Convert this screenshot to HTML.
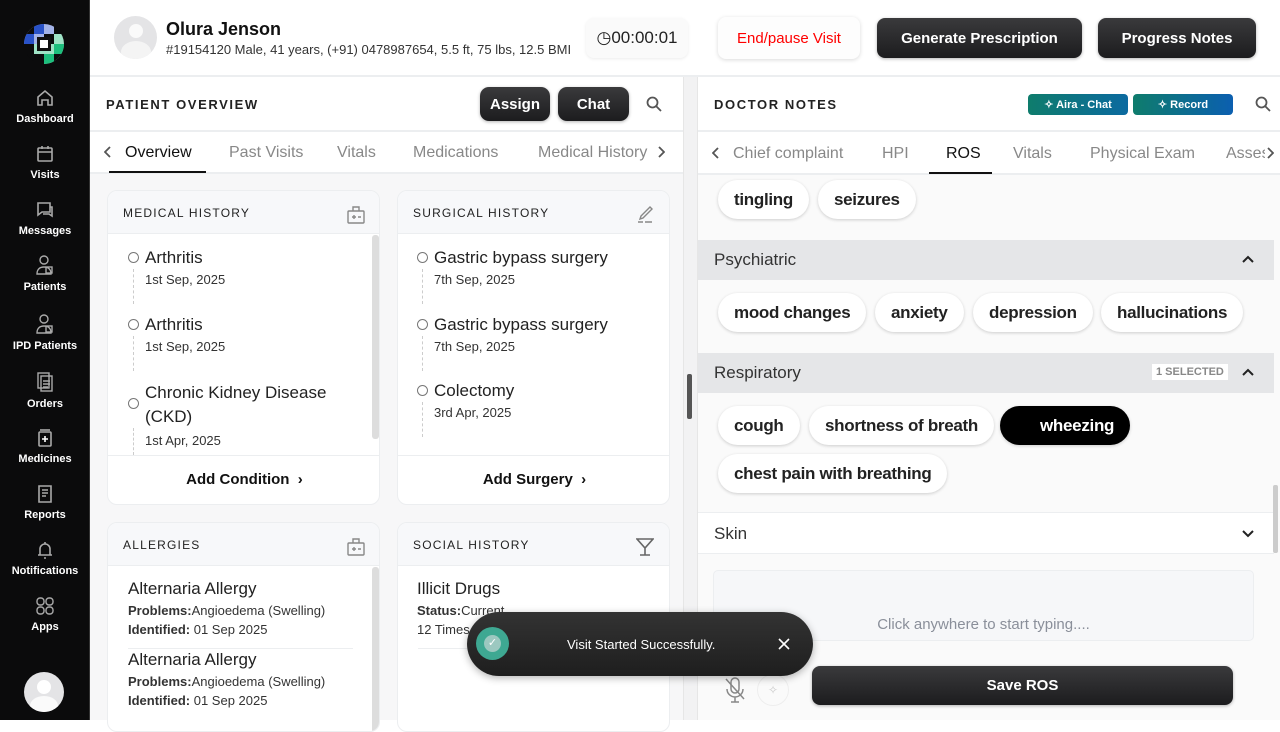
<!DOCTYPE html>
<html><head><style>
*{box-sizing:border-box;margin:0;padding:0}
body{width:1280px;height:720px;overflow:hidden;font-family:"Liberation Sans",sans-serif;background:#fff;position:relative;color:#111}
.abs{position:absolute}
.sb{left:0;top:0;width:90px;height:720px;background:#0b0b0c;border-right:1px solid #333}
.nav{position:absolute;left:0;width:90px;text-align:center;color:#fff;font-size:11px;font-weight:bold}
.nav svg{display:block;margin:0 auto 5px}
.hdr{left:90px;top:0;width:1190px;height:77px;border-bottom:2px solid #eceef0;background:#fff}
.btn{position:absolute;border-radius:8px;font-weight:bold;font-size:15px;text-align:center;display:flex;align-items:center;justify-content:center}
.dark{background:linear-gradient(#3a3a3c,#1c1c1e);color:#fff;box-shadow:0 1px 3px rgba(0,0,0,.3)}
.title{font-size:13px;letter-spacing:1.6px;font-weight:bold;color:#222}
.tab{position:absolute;font-size:16px;color:#888}
.card{position:absolute;background:#fff;border:1px solid #eceef0;border-radius:10px;overflow:hidden}
.ch{height:43px;background:#f7f8fa;border-bottom:1px solid #eceef0;padding:15px 15px;font-size:12px;letter-spacing:1.2px;color:#222}
.it{position:absolute;font-size:17px;color:#222}
.it .d{font-size:13px;color:#333;margin-top:4px}
.circ{position:absolute;width:11px;height:11px;border:1.5px solid #777;border-radius:50%}
.vl{position:absolute;width:0;border-left:1px dashed #ccc}
.chip{position:absolute;height:39px;border-radius:20px;background:#fff;box-shadow:0 1px 3px rgba(0,0,0,.18);font-size:17px;font-weight:bold;color:#222;display:flex;align-items:center;padding:0 16px;letter-spacing:-0.3px}
.band{position:absolute;left:698px;width:576px;height:40px;background:#e5e6e8;font-size:17px;color:#333;padding:10px 16px}
.chev{position:absolute;right:20px;top:15px}
</style></head><body>
<div class="abs sb">
 <svg class="abs" style="left:24px;top:24px" width="40" height="40" viewBox="0 0 40 40">
  <defs><clipPath id="c"><circle cx="20" cy="20" r="20"/></clipPath></defs>
  <g clip-path="url(#c)">
  <path d="M0 0h20v20H0z" fill="#a3b3e8"/><path d="M20 20h20v20H20z" fill="#9fe3c6"/>
  <path d="M10 0h10v10H10zM0 10h10v10H0z" fill="#2952c8"/><path d="M0 0h10v10H0z" fill="#0b0b0c"/>
  <path d="M20 0h10v10H20z" fill="#a3b3e8"/><path d="M30 0h10v10H30z" fill="#0b0b0c"/>
  <path d="M0 30h10v10H0z" fill="#0b0b0c"/><path d="M30 30h10v10H30z" fill="#0b0b0c"/>
  <path d="M20 30h10v10H20zM30 20h10v10H30z" fill="#1dbf7d"/><path d="M10 20h10v10H10z" fill="#9fe3c6"/>
  <path d="M30 10h10v10H30z" fill="#9fe3c6"/>
  <path d="M13 13h14v14H13z" fill="#111"/><rect x="16" y="16" width="8" height="8" fill="#fff"/></g></svg>
 <div class="nav" style="top:88px"><svg width="20" height="20" viewBox="0 0 20 20" fill="none" stroke="#aaa" stroke-width="1.6"><path d="M3 9l7-6 7 6v8h-4v-5H7v5H3z"/></svg>Dashboard</div>
 <div class="nav" style="top:144px"><svg width="20" height="20" viewBox="0 0 20 20" fill="none" stroke="#aaa" stroke-width="1.6"><rect x="3" y="4" width="14" height="13" rx="1"/><path d="M3 8h14M7 2v3M13 2v3"/></svg>Visits</div>
 <div class="nav" style="top:200px"><svg width="20" height="20" viewBox="0 0 20 20" fill="none" stroke="#aaa" stroke-width="1.6"><path d="M3 3h12v9H7l-4 3z"/><path d="M15 7h2v9l-3-2H8"/></svg>Messages</div>
 <div class="nav" style="top:254px"><svg width="20" height="22" viewBox="0 0 20 22" fill="none" stroke="#aaa" stroke-width="1.4"><circle cx="9" cy="6" r="4"/><path d="M2 20c0-5 3-7 7-7s7 2 7 7z"/><rect x="11" y="13" width="6" height="6"/></svg>Patients</div>
 <div class="nav" style="top:313px"><svg width="20" height="22" viewBox="0 0 20 22" fill="none" stroke="#aaa" stroke-width="1.4"><circle cx="9" cy="6" r="4"/><path d="M2 20c0-5 3-7 7-7s7 2 7 7z"/><rect x="11" y="13" width="6" height="6"/></svg>IPD Patients</div>
 <div class="nav" style="top:371px"><svg width="20" height="22" viewBox="0 0 20 22" fill="none" stroke="#aaa" stroke-width="1.4"><rect x="3" y="2" width="11" height="15"/><rect x="6" y="5" width="11" height="15"/><path d="M8 10h7M8 13h7M8 16h5"/></svg>Orders</div>
 <div class="nav" style="top:428px"><svg width="20" height="20" viewBox="0 0 20 20" fill="none" stroke="#aaa" stroke-width="1.6"><path d="M5 2h10"/><rect x="4" y="4" width="12" height="14" rx="1"/><path d="M10 8v6M7 11h6" stroke="#fff"/></svg>Medicines</div>
 <div class="nav" style="top:484px"><svg width="20" height="20" viewBox="0 0 20 20" fill="none" stroke="#aaa" stroke-width="1.6"><path d="M4 2h12v16H4z"/><path d="M7 6h6M7 9h6M7 12h4"/></svg>Reports</div>
 <div class="nav" style="top:540px"><svg width="20" height="20" viewBox="0 0 20 20" fill="none" stroke="#aaa" stroke-width="1.6"><path d="M5 15V9a5 5 0 0110 0v6zM3 15h14M10 2v2M9 18h2"/></svg>Notifications</div>
 <div class="nav" style="top:596px"><svg width="20" height="20" viewBox="0 0 20 20" fill="none" stroke="#aaa" stroke-width="1.4"><rect x="2" y="2" width="7" height="7" rx="3"/><rect x="11" y="2" width="7" height="7" rx="3"/><rect x="2" y="11" width="7" height="7" rx="3"/><rect x="11" y="11" width="7" height="7" rx="3"/></svg>Apps</div>
 <div class="abs" style="left:24px;top:672px;width:40px;height:40px;border-radius:50%;background:#e4e4e6;overflow:hidden"><div class="abs" style="left:13px;top:8px;width:14px;height:14px;border-radius:50%;background:#fff"></div><div class="abs" style="left:6px;top:24px;width:28px;height:20px;border-radius:50%;background:#fafafa"></div></div>
</div>

<div class="abs hdr">
 <div class="abs" style="left:24px;top:16px;width:43px;height:43px;border-radius:50%;background:#e4e4e6;overflow:hidden"><div class="abs" style="left:15px;top:8px;width:14px;height:14px;border-radius:50%;background:#fafafa"></div><div class="abs" style="left:7px;top:25px;width:30px;height:22px;border-radius:50%;background:#f4f4f4"></div></div>
 <div class="abs" style="left:76px;top:19px;font-size:18px;font-weight:bold;color:#111">Olura Jenson</div>
 <div class="abs" style="left:76px;top:42px;font-size:13px;color:#333">#19154120 Male, 41 years, (+91) 0478987654, 5.5 ft, 75 lbs, 12.5 BMI</div>
 <div class="btn" style="left:496px;top:18px;width:102px;height:40px;background:#fafafa;box-shadow:0 1px 3px rgba(0,0,0,.08);font-weight:normal;font-size:17px;color:#222">◷00:00:01</div>
 <div class="btn" style="left:628px;top:17px;width:142px;height:42px;background:#fdfdfd;box-shadow:0 1px 4px rgba(0,0,0,.15);color:#f00;font-weight:normal">End/pause Visit</div>
 <div class="btn dark" style="left:787px;top:18px;width:205px;height:40px">Generate Prescription</div>
 <div class="btn dark" style="left:1008px;top:18px;width:158px;height:40px">Progress Notes</div>
</div>

<div class="abs" style="left:90px;top:77px;width:593px;height:643px;background:#f7f7f8"></div>
<div class="abs" style="left:90px;top:77px;width:593px;height:97px;background:#fff;border-bottom:2px solid #eceef0"></div>
<div class="abs" style="left:90px;top:130px;width:593px;height:2px;background:#eceef0"></div>
<div class="abs title" style="left:106px;top:97px">PATIENT OVERVIEW</div>
<div class="btn dark" style="left:480px;top:87px;width:70px;height:34px;border-radius:9px">Assign</div>
<div class="btn dark" style="left:558px;top:87px;width:71px;height:34px;border-radius:9px">Chat</div>
<svg class="abs" style="left:646px;top:96px" width="16" height="16" viewBox="0 0 16 16" fill="none" stroke="#555" stroke-width="1.8"><circle cx="6.5" cy="6.5" r="5"/><path d="M10 10l5 5"/></svg>
<svg class="abs" style="left:104px;top:146px" width="8" height="12" viewBox="0 0 8 12" fill="none" stroke="#555" stroke-width="1.8"><path d="M6 1L1 6l5 5"/></svg>
<div class="tab" style="left:125px;top:144px;color:#111">Overview</div>
<div class="abs" style="left:109px;top:171px;width:97px;height:2px;background:#111"></div>
<div class="tab" style="left:229px;top:144px">Past Visits</div>
<div class="tab" style="left:337px;top:144px">Vitals</div>
<div class="tab" style="left:413px;top:144px">Medications</div>
<div class="tab" style="left:538px;top:144px">Medical History</div>
<svg class="abs" style="left:657px;top:146px" width="8" height="12" viewBox="0 0 8 12" fill="none" stroke="#555" stroke-width="1.8"><path d="M2 1l5 5-5 5"/></svg>

<div class="card" style="left:107px;top:190px;width:273px;height:315px">
 <div class="ch">MEDICAL HISTORY</div>
 <svg class="abs" style="left:239px;top:15px" width="18" height="18" viewBox="0 0 18 18" fill="none" stroke="#888" stroke-width="1.4"><rect x="1" y="5" width="16" height="12" rx="1"/><path d="M6 5V1h6v4M5 11h4M7 9v4M11 11h3"/></svg>
 <div class="abs" style="left:264px;top:44px;width:7px;height:204px;background:#ddd;border-radius:3px"></div>
 <div class="abs" style="left:0;top:264px;width:273px;height:1px;background:#eceef0"></div>
 <div class="abs" style="left:0;top:280px;width:273px;text-align:center;font-size:15px;font-weight:bold">Add Condition &nbsp;›</div>
</div>
<div class="circ" style="left:128px;top:252px"></div><div class="vl" style="left:133px;top:269px;height:35px"></div>
<div class="it" style="left:145px;top:248px">Arthritis<div class="d">1st Sep, 2025</div></div>
<div class="circ" style="left:128px;top:319px"></div><div class="vl" style="left:133px;top:336px;height:35px"></div>
<div class="it" style="left:145px;top:315px">Arthritis<div class="d">1st Sep, 2025</div></div>
<div class="circ" style="left:128px;top:398px"></div><div class="vl" style="left:133px;top:428px;height:27px"></div>
<div class="it" style="left:145px;top:381px;line-height:24px">Chronic Kidney Disease<br>(CKD)<div class="d" style="line-height:16px">1st Apr, 2025</div></div>

<div class="card" style="left:397px;top:190px;width:273px;height:315px">
 <div class="ch">SURGICAL HISTORY</div>
 <svg class="abs" style="left:238px;top:15px" width="18" height="18" viewBox="0 0 18 18" fill="none" stroke="#888" stroke-width="1.4"><path d="M14 1l2 2-9 9-3 1 1-3zM2 16h5M9 16h7"/></svg>
 <div class="abs" style="left:0;top:264px;width:273px;height:1px;background:#eceef0"></div>
 <div class="abs" style="left:0;top:280px;width:273px;text-align:center;font-size:15px;font-weight:bold">Add Surgery &nbsp;›</div>
</div>
<div class="circ" style="left:417px;top:252px"></div><div class="vl" style="left:422px;top:269px;height:35px"></div>
<div class="it" style="left:434px;top:248px">Gastric bypass surgery<div class="d">7th Sep, 2025</div></div>
<div class="circ" style="left:417px;top:319px"></div><div class="vl" style="left:422px;top:336px;height:35px"></div>
<div class="it" style="left:434px;top:315px">Gastric bypass surgery<div class="d">7th Sep, 2025</div></div>
<div class="circ" style="left:417px;top:385px"></div><div class="vl" style="left:422px;top:402px;height:35px"></div>
<div class="it" style="left:434px;top:381px">Colectomy<div class="d">3rd Apr, 2025</div></div>

<div class="card" style="left:107px;top:522px;width:273px;height:210px">
 <div class="ch">ALLERGIES</div>
 <svg class="abs" style="left:239px;top:15px" width="18" height="18" viewBox="0 0 18 18" fill="none" stroke="#888" stroke-width="1.4"><rect x="1" y="5" width="16" height="12" rx="1"/><path d="M6 5V1h6v4M5 11h4M7 9v4M11 11h3"/></svg>
 <div class="abs" style="left:264px;top:44px;width:7px;height:170px;background:#ddd;border-radius:3px"></div>
 <div class="abs" style="left:20px;top:125px;width:225px;height:1px;background:#eceef0"></div>
</div>
<div class="it" style="left:128px;top:579px">Alternaria Allergy<div class="d"><b>Problems:</b>Angioedema (Swelling)</div><div class="d"><b>Identified:</b> 01 Sep 2025</div></div>
<div class="it" style="left:128px;top:650px">Alternaria Allergy<div class="d"><b>Problems:</b>Angioedema (Swelling)</div><div class="d"><b>Identified:</b> 01 Sep 2025</div></div>

<div class="card" style="left:397px;top:522px;width:273px;height:210px">
 <div class="ch">SOCIAL HISTORY</div>
 <svg class="abs" style="left:238px;top:14px" width="18" height="20" viewBox="0 0 18 20" fill="none" stroke="#666" stroke-width="1.6"><path d="M1 2h16L9 11zM9 11v7M4 18h10"/></svg>
 <div class="abs" style="left:20px;top:125px;width:235px;height:1px;background:#eceef0"></div>
</div>
<div class="it" style="left:417px;top:579px">Illicit Drugs<div class="d"><b>Status:</b>Current</div><div class="d">12 Times Per Week x 7 years</div></div>

<div class="abs" style="left:683px;top:77px;width:15px;height:643px;background:#f2f2f3;border-left:1px solid #e6e6e6;border-right:1px solid #e6e6e6"></div>
<div class="abs" style="left:687px;top:374px;width:5px;height:45px;background:#555;border-radius:2px"></div>

<div class="abs" style="left:698px;top:77px;width:582px;height:643px;background:#fafafa"></div>
<div class="abs" style="left:698px;top:77px;width:582px;height:98px;background:#fff;border-bottom:2px solid #eceef0"></div>
<div class="abs" style="left:698px;top:130px;width:582px;height:2px;background:#eceef0"></div>
<div class="abs title" style="left:714px;top:97px">DOCTOR NOTES</div>
<div class="btn" style="left:1028px;top:94px;width:100px;height:21px;border-radius:4px;background:linear-gradient(90deg,#0e7c6c,#0c6aa0);color:#fff;font-size:11px">✧ Aira - Chat</div>
<div class="btn" style="left:1133px;top:94px;width:100px;height:21px;border-radius:4px;background:linear-gradient(90deg,#0e7c6c,#0c5fb0);color:#fff;font-size:11px">✧ Record</div>
<svg class="abs" style="left:1255px;top:96px" width="16" height="16" viewBox="0 0 16 16" fill="none" stroke="#555" stroke-width="1.8"><circle cx="6.5" cy="6.5" r="5"/><path d="M10 10l5 5"/></svg>
<svg class="abs" style="left:712px;top:147px" width="8" height="12" viewBox="0 0 8 12" fill="none" stroke="#555" stroke-width="1.8"><path d="M6 1L1 6l5 5"/></svg>
<div class="tab" style="left:733px;top:145px">Chief complaint</div>
<div class="tab" style="left:882px;top:145px">HPI</div>
<div class="tab" style="left:946px;top:145px;color:#111">ROS</div>
<div class="abs" style="left:929px;top:172px;width:63px;height:2px;background:#111"></div>
<div class="tab" style="left:1013px;top:145px">Vitals</div>
<div class="tab" style="left:1090px;top:145px">Physical Exam</div>
<div class="tab" style="left:1226px;top:145px">Asses</div>
<div class="abs" style="left:1265px;top:132px;width:15px;height:41px;background:#fff"></div>
<svg class="abs" style="left:1266px;top:147px" width="8" height="12" viewBox="0 0 8 12" fill="none" stroke="#555" stroke-width="1.8"><path d="M2 1l5 5-5 5"/></svg>

<div class="chip" style="left:718px;top:180px">tingling</div>
<div class="chip" style="left:818px;top:180px">seizures</div>
<div class="band" style="top:240px">Psychiatric<svg class="chev" width="12" height="8" viewBox="0 0 12 8" fill="none" stroke="#222" stroke-width="2"><path d="M1 7l5-5 5 5"/></svg></div>
<div class="chip" style="left:718px;top:293px">mood changes</div>
<div class="chip" style="left:875px;top:293px">anxiety</div>
<div class="chip" style="left:973px;top:293px">depression</div>
<div class="chip" style="left:1101px;top:293px">hallucinations</div>
<div class="band" style="top:353px">Respiratory<span class="abs" style="left:454px;top:11px;background:#fff;font-size:11px;font-weight:bold;color:#888;padding:2px 4px">1 SELECTED</span><svg class="chev" width="12" height="8" viewBox="0 0 12 8" fill="none" stroke="#222" stroke-width="2"><path d="M1 7l5-5 5 5"/></svg></div>
<div class="chip" style="left:718px;top:406px">cough</div>
<div class="chip" style="left:809px;top:406px">shortness of breath</div>
<div class="chip" style="left:1000px;top:406px;background:#000;color:#fff;padding-left:40px">wheezing</div>
<div class="chip" style="left:718px;top:454px">chest pain with breathing</div>
<div class="abs" style="left:698px;top:512px;width:576px;height:42px;background:#fff;border-top:1px solid #eceef0;border-bottom:1px solid #eceef0;font-size:17px;color:#333;padding:11px 16px">Skin<svg class="chev" style="top:17px" width="12" height="8" viewBox="0 0 12 8" fill="none" stroke="#222" stroke-width="2"><path d="M1 1l5 5 5-5"/></svg></div>
<div class="abs" style="left:1273px;top:485px;width:5px;height:68px;background:#ccc;border-radius:2px"></div>
<div class="abs" style="left:713px;top:570px;width:541px;height:71px;background:#f6f7f9;border:1px solid #eceef0;border-radius:5px;text-align:center;padding-top:45px;font-size:15px;color:#8a8f9a">Click anywhere to start typing....</div>
<svg class="abs" style="left:724px;top:676px" width="22" height="28" viewBox="0 0 22 28" fill="none" stroke="#888" stroke-width="1.5"><rect x="7" y="2" width="8" height="15" rx="4"/><path d="M3 13a8 8 0 0016 0M11 21v5M7 26h8M2 3l18 20"/></svg>
<div class="abs" style="left:757px;top:674px;width:32px;height:32px;border-radius:50%;border:1px solid #eee;color:#ccc;font-size:12px;text-align:center;line-height:30px">✧</div>
<div class="btn dark" style="left:812px;top:666px;width:421px;height:39px;font-size:15px">Save ROS</div>

<div class="abs" style="left:467px;top:612px;width:346px;height:64px;border-radius:32px;background:linear-gradient(#333,#1e1e1e);box-shadow:0 2px 8px rgba(0,0,0,.3)">
 <div class="abs" style="left:9px;top:15px;width:33px;height:33px;border-radius:50%;background:#3ea892"><div class="abs" style="left:8px;top:8px;width:17px;height:17px;border-radius:50%;background:#9cc8c0;color:#fff;font-size:11px;text-align:center;line-height:17px">✓</div></div>
 <div class="abs" style="left:100px;top:25px;font-size:13px;color:#fff">Visit Started Successfully.</div>
 <svg class="abs" style="left:311px;top:26px" width="12" height="12" viewBox="0 0 12 12" stroke="#fff" stroke-width="1.6"><path d="M1 1l10 10M11 1L1 11"/></svg>
</div>
</body></html>
